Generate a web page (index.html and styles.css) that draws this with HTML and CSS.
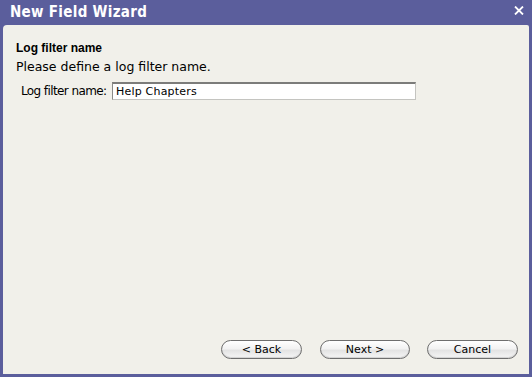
FILE: index.html
```html
<!DOCTYPE html>
<html lang="en">
<head>
    <meta charset="UTF-8">
    <title>New Field Wizard</title>
    <link rel="stylesheet" href="styles.css">
</head>
<body>
    <div class="window">
        <div class="title-bar">
            <span class="title">New Field Wizard</span>
            <svg class="close" width="10" height="9" viewBox="0 0 10 9">
                <path d="M1 0.5 L9 8.5 M9 0.5 L1 8.5" stroke="#fff" stroke-width="1.8" fill="none"/>
            </svg>
        </div>
        <div class="content">
            <div class="step">
                <h2>Log filter name</h2>
                <p>Please define a log filter name.</p>
                <div class="field-row">
                    <label for="filter-name">Log filter name:</label>
                    <input type="text" id="filter-name" value="Help Chapters">
                </div>
            </div>
            <div class="buttons">
                <button class="btn back">&lt; Back</button>
                <button class="btn next">Next &gt;</button>
                <button class="btn cancel">Cancel</button>
            </div>
        </div>
    </div>
</body>
</html>
```

FILE: styles.css
```css
body {
    margin: 0;
    font-family: "DejaVu Sans", Verdana, sans-serif;
    background-color: #5b5e9c;
}
.window {
    width: 532px;
    height: 377px;
    display: flex;
    flex-direction: column;
    background-color: #5b5e9c;
}
.title-bar {
    height: 25px;
    display: flex;
    align-items: center;
    justify-content: space-between;
    padding: 0 8px 0 10px;
    color: #fff;
}
.title {
    font-family: "DejaVu Sans Condensed", "DejaVu Sans", sans-serif;
    font-size: 15px;
    font-weight: bold;
    letter-spacing: 0.3px;
    padding-bottom: 2px;
}
.close {
    margin-bottom: 4px;
}
.content {
    flex: 1;
    margin: 0 3px 3px 3px;
    background-color: #f1f0ea;
    border-top-left-radius: 4px;
    border-top-right-radius: 2px;
    display: flex;
    flex-direction: column;
    justify-content: space-between;
}
.step {
    padding: 16px 0 0 13px;
}
.step h2 {
    margin: 0;
    font-family: "Liberation Sans", Arial, sans-serif;
    font-size: 12px;
    font-weight: bold;
    color: #000;
}
.step p {
    margin: 4px 0 0 0;
    font-size: 12.5px;
    color: #000;
}
.field-row {
    display: flex;
    align-items: center;
    margin-top: 8px;
    padding-left: 5px;
}
.field-row label {
    font-size: 12px;
    letter-spacing: -0.6px;
    width: 91px;
    white-space: nowrap;
}
.field-row input {
    width: 296px;
    height: 13px;
    padding: 1px 3px;
    font-family: "DejaVu Sans", Verdana, sans-serif;
    font-size: 11px;
    letter-spacing: 0.2px;
    border: 1px solid #c4c4c0;
    border-top: 2px solid #7c7c7a;
    border-left-color: #8a8a88;
    background: #fff;
    outline: none;
}
.buttons {
    display: flex;
    justify-content: flex-end;
    padding: 0 11px 15px 0;
}
.btn {
    height: 19px;
    padding: 0;
    font-family: "DejaVu Sans", Verdana, sans-serif;
    font-size: 11px;
    color: #000;
    border: 1px solid #6e6e6e;
    border-radius: 10px;
    background: linear-gradient(#ffffff, #f2f2f2 45%, #e3e3e3 55%, #f6f6f6);
    box-shadow: inset 0 -1px 1px rgba(0, 0, 0, 0.15);
}
.back {
    width: 81px;
}
.next {
    width: 90px;
    margin-left: 18px;
}
.cancel {
    width: 91px;
    margin-left: 17px;
}
```
